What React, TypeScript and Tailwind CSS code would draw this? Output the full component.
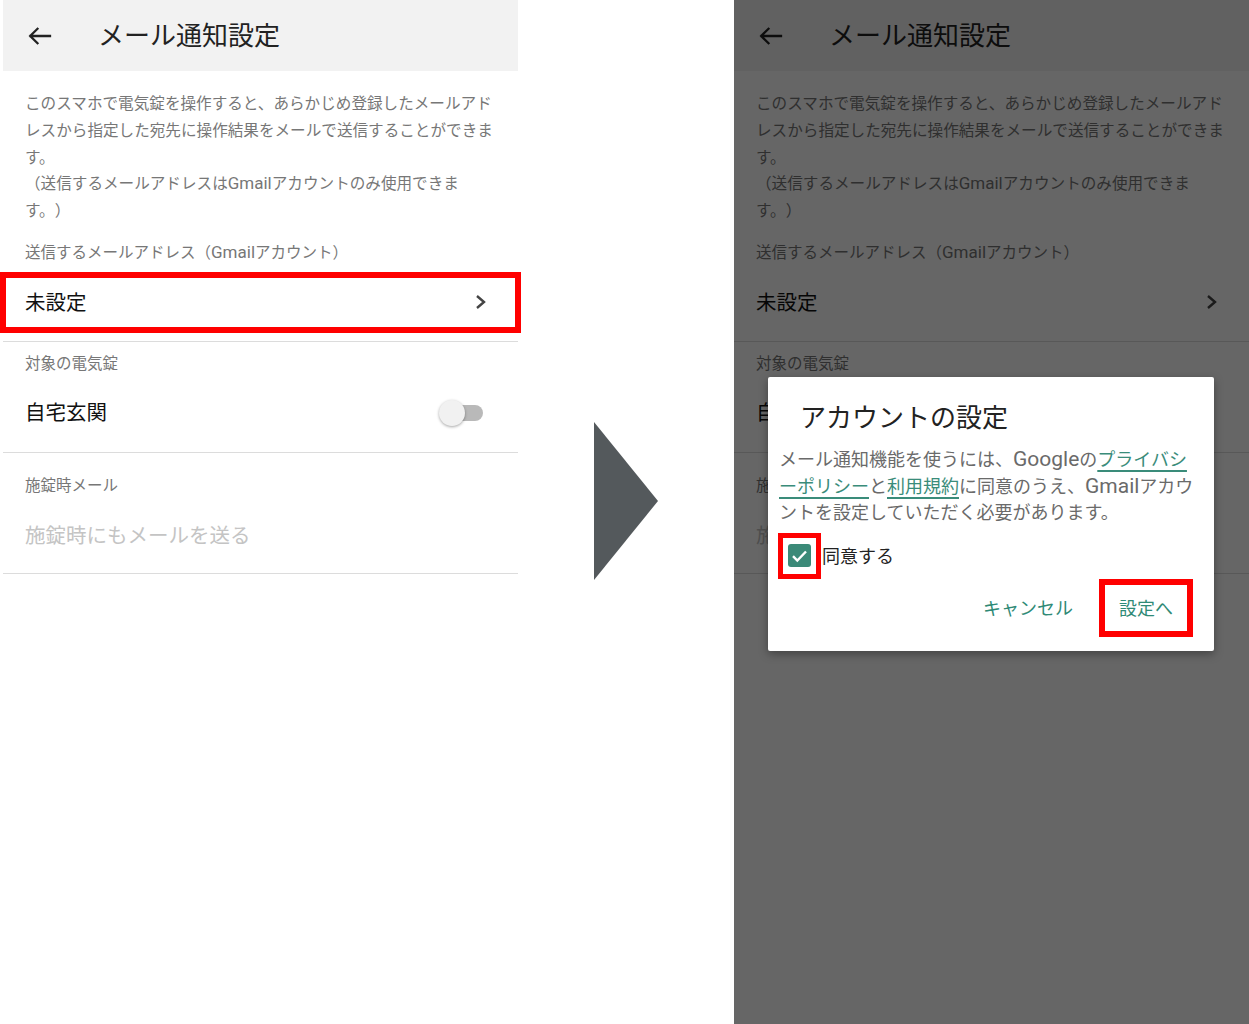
import React from "react";

const FONT = { fontFamily: 'Roboto, "Noto Sans CJK JP", "Noto Sans", sans-serif' };

function BackArrow() {
  return (
    <svg width="24" height="18" viewBox="0 0 24 18" className="shrink-0">
      <path d="M22 9H2.5M9.5 1.8 2.2 9l7.3 7.2" fill="none" stroke="#222" strokeWidth="2.3" strokeLinecap="square" />
    </svg>
  );
}

function Chevron() {
  return (
    <svg width="12" height="16" viewBox="0 0 12 16">
      <path d="M2 2l7 6-7 6" fill="none" stroke="#444" strokeWidth="2.4" />
    </svg>
  );
}

function Screen() {
  return (
    <div className="w-[515px] bg-white [text-spacing-trim:space-all]" style={FONT}>
      <div className="h-[71px] bg-[#f2f2f2] flex items-center pl-[25px]">
        <BackArrow />
        <div className="ml-[46px] text-[26px] text-[#222] leading-none">メール通知設定</div>
      </div>
      <div className="pl-[22px] pt-[20px] text-[15.6px] leading-[26.8px] text-[#777] whitespace-nowrap">
        このスマホで電気錠を操作すると、あらかじめ登録したメールアド
        <br />
        レスから指定した宛先に操作結果をメールで送信することができま
        <br />
        す。
        <br />
        （送信するメールアドレスは<span className="text-[17px] leading-none">Gmail</span>アカウントのみ使用できま
        <br />
        す。）
      </div>
      <div className="pl-[22px] mt-[17px] text-[15.5px] leading-[22px] text-[#777]">
        送信するメールアドレス（<span className="text-[17px] leading-none">Gmail</span>アカウント）
      </div>
      <div className="h-[78px] flex items-center justify-between pl-[22px] pr-[31px] border-b border-[#dcdcdc]">
        <span className="text-[20.5px] text-[#111] pt-[1px]">未設定</span>
        <Chevron />
      </div>
      <div className="pl-[22px] pt-[11px] text-[15.5px] leading-[22px] text-[#777]">対象の電気錠</div>
      <div className="h-[78px] flex items-center justify-between pl-[22px] pr-[35px] border-b border-[#dcdcdc]">
        <span className="text-[20.5px] text-[#111]">自宅玄関</span>
        <div className="relative w-[38px] h-[16px] rounded-full bg-[#b9b9b9]">
          <div className="absolute left-[-6px] top-[-5px] w-[26px] h-[26px] rounded-full bg-[#f1f1f1] shadow-[0_1px_3px_rgba(0,0,0,0.35)]" />
        </div>
      </div>
      <div className="pl-[22px] pt-[22px] text-[15.5px] leading-[22px] text-[#777]">施錠時メール</div>
      <div className="h-[77px] flex items-center pl-[22px] border-b border-[#dcdcdc]">
        <span className="text-[20.5px] text-[#c4c4c4] pt-[2px]">施錠時にもメールを送る</span>
      </div>
    </div>
  );
}

export default function App() {
  return (
    <div className="w-[1249px] h-[1024px] bg-white flex overflow-hidden" style={FONT}>
      <div className="relative ml-[3px] w-[515px]">
        <Screen />
        <div className="absolute left-[-3px] top-[272px] w-[521px] h-[61px] border-[6px] border-[#ff0000]" />
      </div>
      <div className="w-[216px] flex justify-center pt-[422px]">
        <svg width="64" height="158" viewBox="0 0 64 158">
          <polygon points="0,0 64,79 0,158" fill="#54595c" />
        </svg>
      </div>
      <div className="relative w-[515px] h-[1024px] bg-white">
        <Screen />
        <div className="absolute inset-0 bg-black/60" />
        <div className="absolute left-[34px] top-[377px] w-[446px] h-[274px] bg-white rounded-[2px] shadow-[0_3px_10px_rgba(0,0,0,0.35)] [text-spacing-trim:space-all]">
          <div className="pl-[32px] pt-[25px] text-[26px] leading-[32px] text-[#222]">アカウントの設定</div>
          <div className="pl-[11px] mt-[13px] text-[18px] leading-[26.5px] text-[#6a6a6a] whitespace-nowrap">
            メール通知機能を使うには、<span className="text-[21px] leading-none">Google</span>の<span className="text-[#3a8c7a] underline decoration-[1.5px] underline-offset-[4px]">プライバシ</span>
            <br />
            <span className="text-[#3a8c7a] underline decoration-[1.5px] underline-offset-[4px]">ーポリシー</span>と<span className="text-[#3a8c7a] underline decoration-[1.5px] underline-offset-[4px]">利用規約</span>に同意のうえ、<span className="text-[21px] leading-none">Gmail</span>アカウ
            <br />
            ントを設定していただく必要があります。
          </div>
          <div className="flex items-center mt-[6px] ml-[10px]">
            <div className="w-[43px] h-[46px] border-[5px] border-[#ff0000] bg-white flex items-center justify-center">
              <div className="w-[23px] h-[23px] rounded-[3px] bg-[#3b8a78] flex items-center justify-center">
                <svg width="17" height="14" viewBox="0 0 17 14">
                  <path d="M2 7.2l4.3 4.3L15 2.5" fill="none" stroke="#fff" strokeWidth="2.4" />
                </svg>
              </div>
            </div>
            <span className="ml-[1px] text-[18px] text-[#222] pt-[2px]">同意する</span>
          </div>
          <div className="flex items-center justify-end pr-[21px]">
            <span className="text-[18px] text-[#2f8a76] mr-[26px] pt-[2px]">キャンセル</span>
            <div className="h-[58px] border-[6px] border-[#ff0000] px-[14px] flex items-center text-[18px] text-[#2f8a76] pt-[2px]">設定へ</div>
          </div>
        </div>
      </div>
    </div>
  );
}
